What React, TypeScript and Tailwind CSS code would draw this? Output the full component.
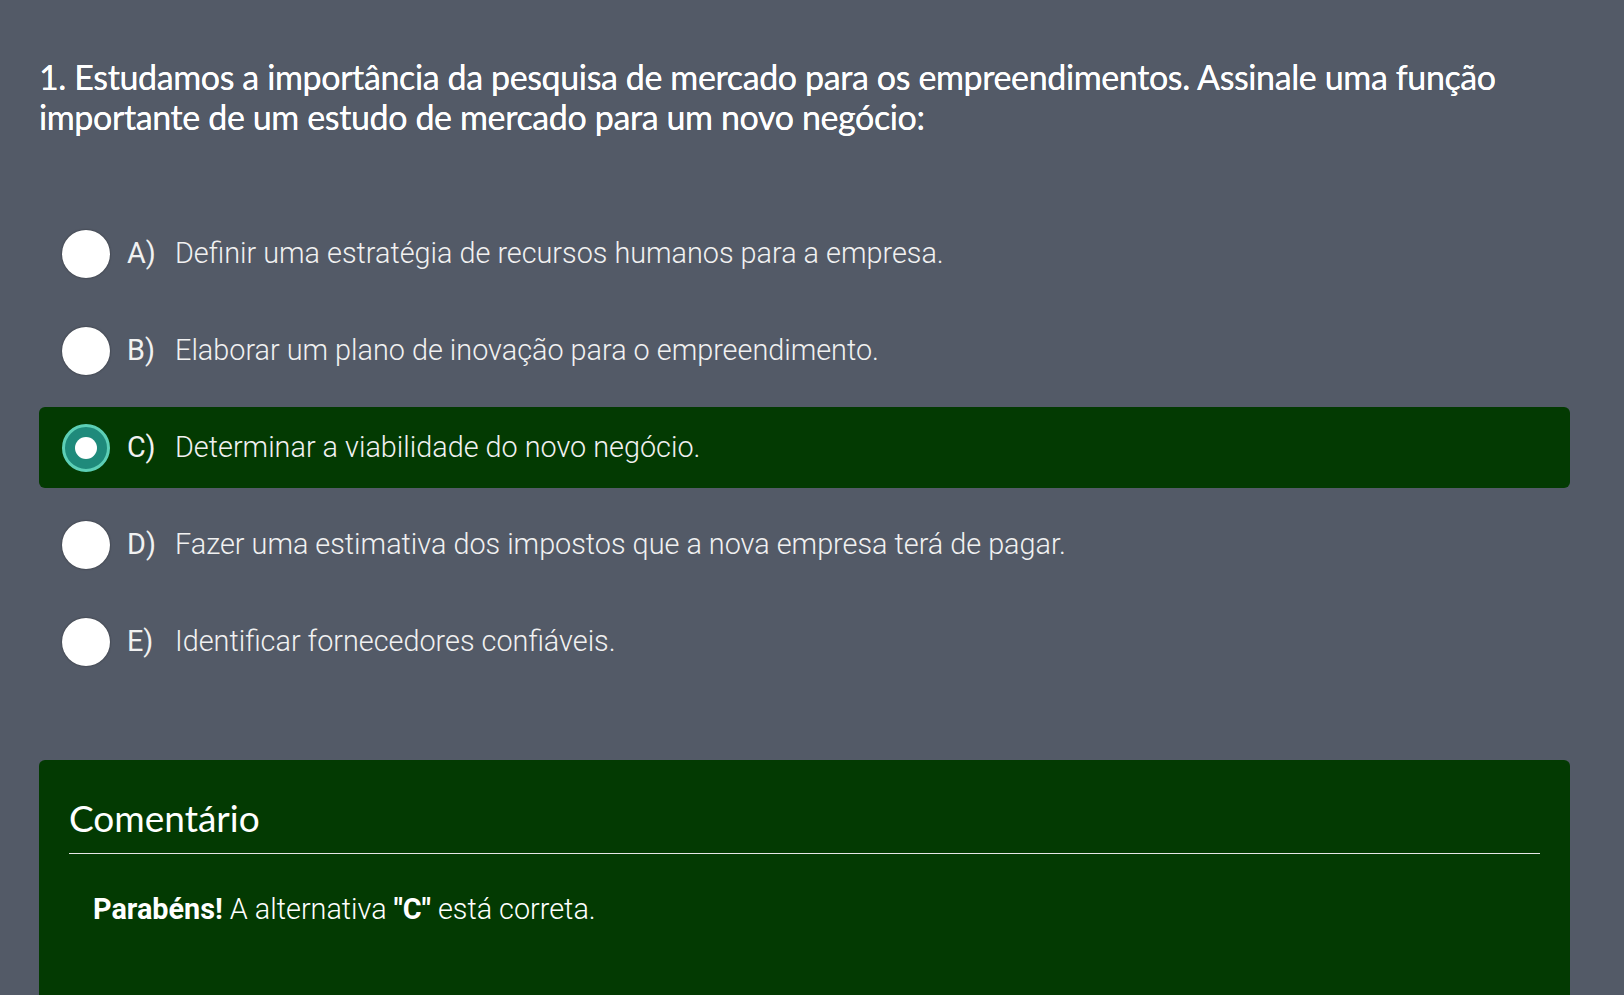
import React from 'react';

const options = [
    { letter: 'A)', text: 'Definir uma estratégia de recursos humanos para a empresa.' },
    { letter: 'B)', text: 'Elaborar um plano de inovação para o empreendimento.' },
    { letter: 'C)', text: 'Determinar a viabilidade do novo negócio.', selected: true },
    { letter: 'D)', text: 'Fazer uma estimativa dos impostos que a nova empresa terá de pagar.' },
    { letter: 'E)', text: 'Identificar fornecedores confiáveis.' },
];

export default function App() {
    return (
        <div className="min-h-screen h-[995px] overflow-hidden bg-[#535a67] pt-[57px] pl-[39px] pr-[54px]">
            {/* Question */}
            <h1 className="text-[34px] leading-[40px] text-white font-['Lato',sans-serif] tracking-[-0.38px] [text-shadow:0_0_0.5px_#fff]">
                1. Estudamos a importância da pesquisa de mercado para os empreendimentos. Assinale uma função importante de um
                estudo de mercado para um novo negócio:
            </h1>

            {/* Options */}
            <div className="mt-[76px] flex flex-col gap-[16px]">
                {options.map((o) => (
                    <div
                        key={o.letter}
                        className={`flex items-center h-[81px] rounded-[6px] pl-[23px] font-['Roboto',sans-serif] text-[28.8px] text-[#f1f1f1] ${
                            o.selected ? 'bg-[#033a02]' : ''
                        }`}
                    >
                        {o.selected ? (
                            <div className="w-[48px] h-[48px] rounded-full bg-[#1f8a7b] border-[3px] border-[#5ccfb6] flex items-center justify-center">
                                <div className="w-[22px] h-[22px] rounded-full bg-white"></div>
                            </div>
                        ) : (
                            <div className="w-[48px] h-[48px] rounded-full bg-white shadow-[0_0_2px_rgba(0,0,0,0.5)]"></div>
                        )}
                        <span className="ml-[17px] w-[48px] font-normal">{o.letter}</span>
                        <span className="font-light">{o.text}</span>
                    </div>
                ))}
            </div>

            {/* Comment */}
            <div className="mt-[78px] bg-[#033a02] rounded-t-[6px] px-[30px] pt-[36px] pb-[120px]">
                <h2 className="text-[37px] leading-[44px] text-white font-['Lato',sans-serif] pb-[13px] border-b border-[#e6e6e6]">
                    Comentário
                </h2>
                <p className="mt-[34px] pl-[24px] text-[28.8px] text-white font-['Roboto',sans-serif] font-light">
                    <b className="font-bold">Parabéns!</b> A alternativa <b className="font-bold">"C"</b> está correta.
                </p>
            </div>
        </div>
    );
}
